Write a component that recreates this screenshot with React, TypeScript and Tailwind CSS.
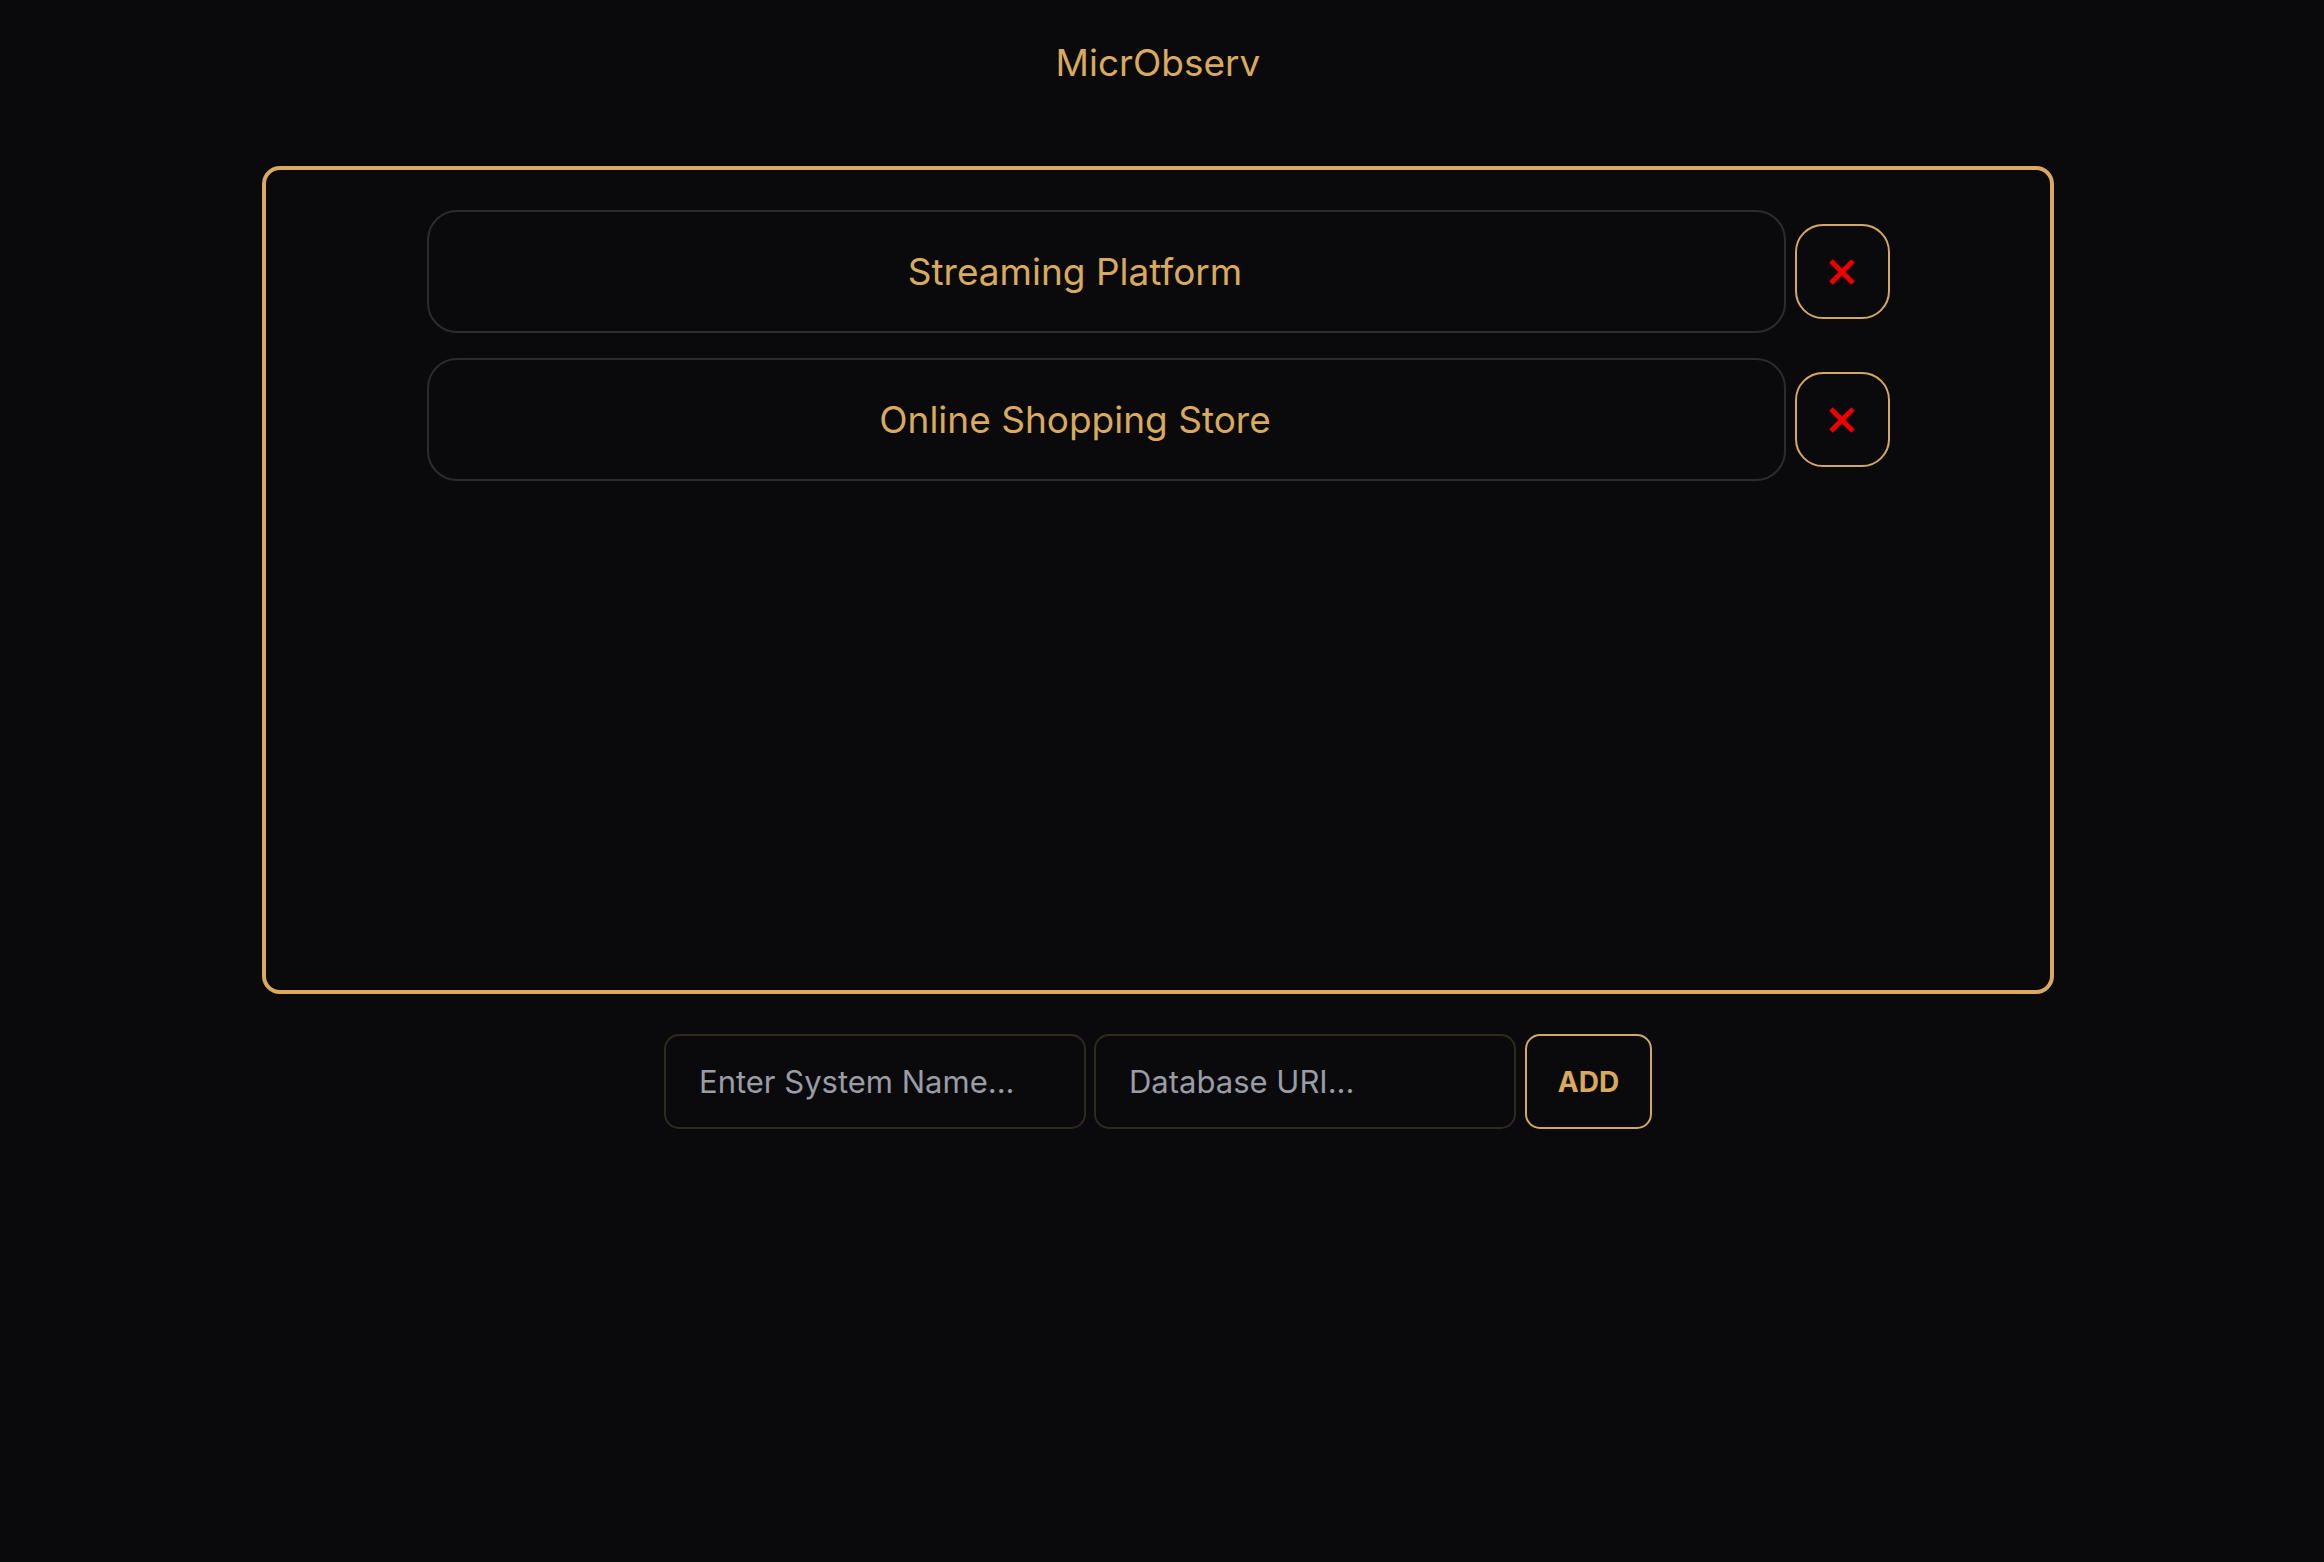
import React from "react";

function XIcon() {
  return (
    <svg width="28" height="28" viewBox="0 0 28 28" aria-hidden="true">
      <line x1="3" y1="3" x2="25" y2="25" stroke="#f00000" strokeWidth="5" strokeLinecap="butt" />
      <line x1="25" y1="3" x2="3" y2="25" stroke="#f00000" strokeWidth="5" strokeLinecap="butt" />
    </svg>
  );
}

function SystemRow({ name }: { name: string }) {
  return (
    <div className="flex items-center gap-[9px]">
      <div className="flex h-[123px] w-[1359px] items-center justify-center rounded-[30px] border-2 border-[#2c2c2f] pr-[62px]">
        <span className="text-[37px] leading-none text-[#d9aa5d]">{name}</span>
      </div>
      <button className="flex h-[95px] w-[95px] items-center justify-center rounded-[28px] border-2 border-[#d4a862] bg-transparent">
        <XIcon />
      </button>
    </div>
  );
}

export default function App() {
  const systems = ["Streaming Platform", "Online Shopping Store"];
  return (
    <div
      className="flex min-h-screen w-full flex-col items-center bg-[#0a0a0c] pr-2"
      style={{ fontFamily: "Inter, 'Noto Sans', 'Liberation Sans', sans-serif" }}
    >
      <h1 className="mt-[41px] mb-[81px] text-[37px] leading-[44px] font-normal text-[#d9aa5d]">
        MicrObserv
      </h1>
      <div className="flex h-[828px] w-[1792px] flex-col items-center gap-[25px] rounded-[18px] border-4 border-[#d9aa5d] pt-[40px]">
        {systems.map((s) => (
          <SystemRow key={s} name={s} />
        ))}
      </div>
      <div className="mt-[40px] flex items-center gap-[8px]">
        <input
          placeholder="Enter System Name..."
          className="h-[95px] w-[422px] rounded-[15px] border-2 border-[#2f2a20] bg-transparent pl-[33px] text-[31px] text-gray-200 outline-none placeholder:text-[#9a9ca6]"
        />
        <input
          placeholder="Database URI..."
          className="h-[95px] w-[422px] rounded-[15px] border-2 border-[#2f2a20] bg-transparent pl-[33px] text-[31px] text-gray-200 outline-none placeholder:text-[#9a9ca6]"
        />
        <button className="ml-px h-[95px] w-[127px] rounded-[15px] border-2 border-[#d4a862] bg-transparent text-[28px] font-bold text-[#d9aa5d]">
          ADD
        </button>
      </div>
    </div>
  );
}
